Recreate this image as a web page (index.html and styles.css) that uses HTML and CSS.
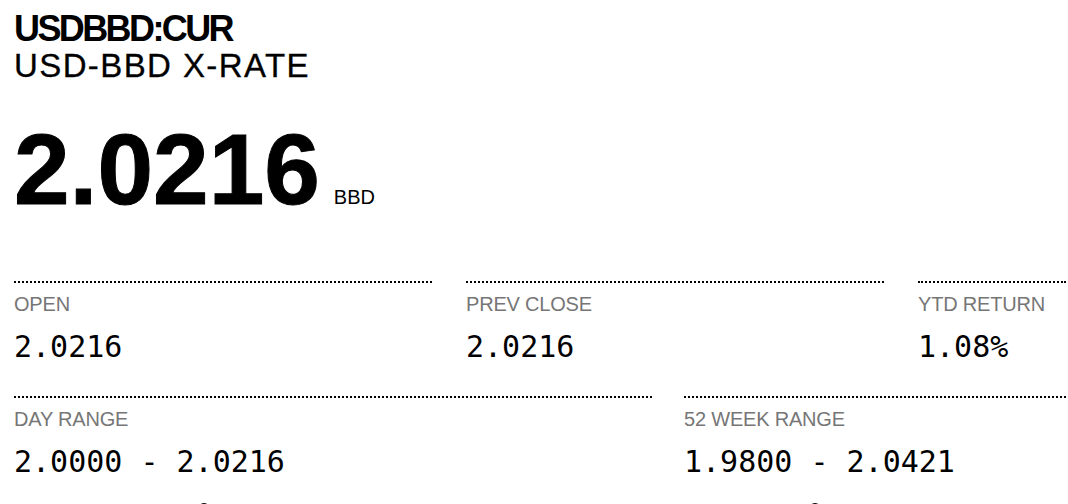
FILE: index.html
```html
<!DOCTYPE html>
<html lang="en">
<head>
<meta charset="utf-8">
<title>USDBBD:CUR</title>
<link rel="stylesheet" href="styles.css">
</head>
<body>
<main class="quote">
  <header class="quote-header">
    <h1 class="ticker">USDBBD:CUR</h1>
    <h2 class="name">USD-BBD X-RATE</h2>
  </header>
  <div class="price">
    <span class="price-value">2.0216</span>
    <span class="price-currency">BBD</span>
  </div>
  <section class="stats stats-three">
    <div class="stat">
      <div class="stat-label">OPEN</div>
      <div class="stat-value">2.0216</div>
    </div>
    <div class="stat">
      <div class="stat-label">PREV CLOSE</div>
      <div class="stat-value">2.0216</div>
    </div>
    <div class="stat">
      <div class="stat-label">YTD RETURN</div>
      <div class="stat-value">1.08%</div>
    </div>
  </section>
  <section class="stats stats-two">
    <div class="stat">
      <div class="stat-label">DAY RANGE</div>
      <div class="stat-value">2.0000 - 2.0216</div>
      <div class="range"><span class="range-marker" style="left: 184px"></span></div>
    </div>
    <div class="stat">
      <div class="stat-label">52 WEEK RANGE</div>
      <div class="stat-value">1.9800 - 2.0421</div>
      <div class="range"><span class="range-marker" style="left: 125px"></span></div>
    </div>
  </section>
</main>
</body>
</html>
```
FILE: styles.css
```css
html, body {
  margin: 0;
  padding: 0;
  background: #fff;
  overflow: hidden;
}

body {
  font-family: "Liberation Sans", Arial, sans-serif;
  color: #000;
}

.quote {
  padding: 11px 2px 0 14px;
}

.quote-header {
  display: flex;
  flex-direction: column;
}

.ticker {
  margin: 0;
  font-size: 36px;
  line-height: 36px;
  font-weight: 700;
  letter-spacing: -2.6px;
}

.name {
  margin: 1px 0 0;
  font-size: 33px;
  line-height: 36px;
  font-weight: 400;
  letter-spacing: 1.4px;
  -webkit-text-stroke: 0.3px #000;
}

.price {
  display: flex;
  align-items: baseline;
  margin-top: 35px;
  line-height: 100px;
}

.price-value {
  font-size: 100px;
  font-weight: 700;
  -webkit-text-stroke: 1px #000;
}

.price-currency {
  margin-left: 14px;
  font-size: 20px;
}

.stats {
  display: grid;
  margin-top: 34px;
}

.stats-three {
  grid-template-columns: 418px 418px 1fr;
  column-gap: 34px;
}

.stats-two {
  margin-top: 0;
  grid-template-columns: 638px 1fr;
  column-gap: 32px;
}

.stat {
  border-top: 2px dotted #000;
  padding-top: 9px;
  padding-bottom: 31px;
}

.stat-label {
  font-size: 20px;
  line-height: 24px;
  color: #767676;
  letter-spacing: -0.2px;
}

.stat-value {
  margin-top: 13px;
  font-family: "DejaVu Sans Mono", "Liberation Mono", monospace;
  font-size: 30px;
  line-height: 36px;
}

.range {
  position: relative;
  height: 40px;
}

.range-marker {
  position: absolute;
  top: 23px;
  width: 12px;
  height: 12px;
  border-radius: 50%;
  background: #000;
}
```
